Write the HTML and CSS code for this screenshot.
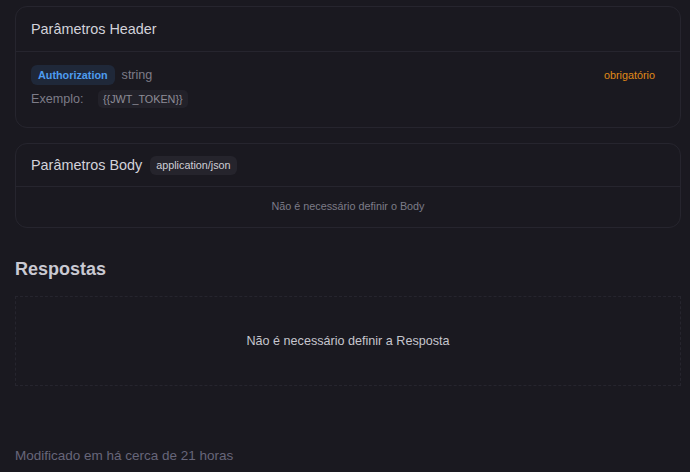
FILE: index.html
```
<!DOCTYPE html>
<html lang="pt">
<head>
<meta charset="utf-8">
<link rel="stylesheet" href="styles.css">
</head>
<body>
<main class="page">
  <section class="card">
    <div class="card-head">Parâmetros Header</div>
    <div class="card-body params">
      <div class="param-row">
        <span class="pname">Authorization</span>
        <span class="ptype">string</span>
        <span class="req">obrigatório</span>
      </div>
      <div class="example-row">
        <span class="ex-label">Exemplo:</span>
        <span class="code">{{JWT_TOKEN}}</span>
      </div>
    </div>
  </section>

  <section class="card">
    <div class="card-head head-body">Parâmetros Body <span class="mime">application/json</span></div>
    <div class="card-body empty">Não é necessário definir o Body</div>
  </section>

  <h2 class="title">Respostas</h2>
  <div class="dashed">Não é necessário definir a Resposta</div>

  <footer class="foot">Modificado em há cerca de 21 horas</footer>
</main>
</body>
</html>
```
FILE: styles.css
```
html, body {
  margin: 0;
  background: #1a1920;
  font-family: "Liberation Sans", Arial, sans-serif;
}
.page {
  padding: 6px 9px 0 15px;
  display: flex;
  flex-direction: column;
}
.card {
  border: 1px solid #26252e;
  border-radius: 12px;
  margin-bottom: 15px;
}
.card-head {
  height: 45px;
  box-sizing: border-box;
  padding: 0 15px;
  display: flex;
  align-items: center;
  font-size: 14.4px;
  color: #d2d2da;
  border-bottom: 1px solid #26252e;
}
.head-body {
  height: 43px;
}
.mime {
  margin-left: 8px;
  font-size: 10.8px;
  background: #25242c;
  color: #cfcfd6;
  border-radius: 6px;
  padding: 0 6px;
  height: 19px;
  line-height: 19px;
}
.params {
  padding: 13px 15px 19px;
}
.param-row {
  display: flex;
  align-items: center;
  height: 20px;
}
.pname {
  font-size: 10.8px;
  font-weight: bold;
  color: #4e9cf0;
  background: #1f2839;
  border-radius: 6px;
  padding: 0 7px;
  height: 20px;
  line-height: 20px;
}
.ptype {
  margin-left: 7px;
  font-size: 12.6px;
  color: #7d7c88;
}
.req {
  margin-left: auto;
  margin-right: 10px;
  font-size: 10.8px;
  color: #e08a18;
}
.example-row {
  display: flex;
  align-items: center;
  margin-top: 5px;
  height: 18px;
}
.ex-label {
  font-size: 12.6px;
  color: #7d7c88;
  width: 67px;
}
.code {
  font-size: 10.8px;
  color: #8e8d98;
  background: #222129;
  border-radius: 5px;
  padding: 0 5px;
  height: 18px;
  line-height: 18px;
}
.empty {
  text-align: center;
  font-size: 10.8px;
  color: #7d7c88;
  padding: 13px 0 14px;
  line-height: 13px;
}
.title {
  margin: 14px 0 0;
  font-size: 18px;
  font-weight: bold;
  color: #c9c9d2;
  height: 24px;
  line-height: 24px;
}
.dashed {
  margin-top: 15px;
  height: 90px;
  box-sizing: border-box;
  border: 1px dashed #26252e;
  display: flex;
  align-items: center;
  justify-content: center;
  font-size: 12.6px;
  color: #c6c6ce;
}
.foot {
  margin-top: 62px;
  font-size: 13.5px;
  color: #67667a;
}
```
